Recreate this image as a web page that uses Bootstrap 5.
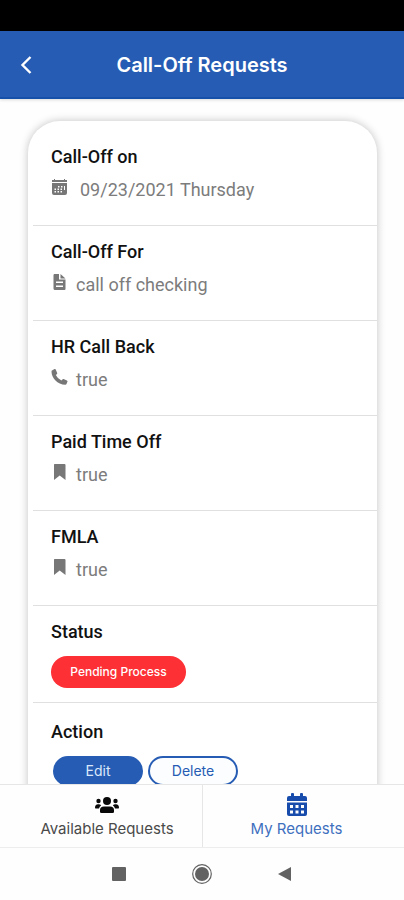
<!DOCTYPE html>
<html lang="en">
<head>
<meta charset="utf-8">
<meta name="viewport" content="width=device-width, initial-scale=1">
<title>Call-Off Requests</title>
<link href="https://cdn.jsdelivr.net/npm/bootstrap@5.3.0/dist/css/bootstrap.min.css" rel="stylesheet">
<style>
  body { font-family: Roboto, "Liberation Sans", sans-serif; background: #fefefe; }
  .device-status { height: 31px; background: #000; }
  .app-header { height: 68px; padding-top: 2px; background: #265cb3; border-bottom: 2px solid #1750a8; box-shadow: 0 1px 3px rgba(0,0,0,.15); display: grid; grid-template-columns: 52px 1fr 52px; }
  .app-header h1 { font: 600 20px/28px Inter, sans-serif; }
  .request-scroll { min-height: 0; padding: 22px 27px 0 28px; }
  .request-card { border-radius: 32px 32px 0 0; padding: 10px 0 20px 5px; box-shadow: 0 0 8px rgba(0,0,0,.24); background: #fff; }
  .request-row { padding: 14px 18px 23px; border-bottom: 1px solid #e0e0e0; }
  .request-row dt { font-size: 18px; line-height: 24px; font-weight: 500; color: #111; }
  .request-row dd { margin: 9px 0 0; font-size: 18px; line-height: 24px; color: #7c7c7c; }
  .request-row dd svg { width: 17px; height: 17px; margin: 1px 8px 0 0; flex: none; fill: #777; }
  .request-row dd .date-icon { margin-right: 12px; }
  .status-row { padding-bottom: 14px; }
  .action-row { padding-top: 17px; border-bottom: 0; }
  .request-row .pill-line { margin-top: 12px; }
  .pill { height: 32px; border-radius: 16px; font: 500 12px/16px Inter, sans-serif; }
  .pill-status { width: 135px; background: #fd3035; color: #fff; }
  .pill-buttons { gap: 5px; padding-left: 2px; }
  .pill-action { width: 90px; height: 30px; padding: 0; border: 2px solid #265cb3; font-weight: 400; font-size: 14px; }
  .pill-edit, .pill-edit:hover { background: #265cb3; color: #dbe8fb; }
  .pill-delete, .pill-delete:hover { background: #fbfdff; color: #265cb3; }
  .tab-bar { height: 64px; border-top: 1px solid #e6e6e6; border-bottom: 1px solid #ededed; background: #fefefe; }
  .tab-bar a { font: 400 15px/20px Inter, sans-serif; color: #4a4a4a; padding: 8px 0 0 12px; }
  .tab-bar a + a { border-left: 1px solid #e6e6e6; color: #3f70be; padding: 8px 14px 0 0; }
  .tab-bar svg { height: 24px; margin-bottom: 2px; }
  .system-nav { height: 52px; gap: 65px; }
</style>
<script src="https://cdn.jsdelivr.net/npm/bootstrap@5.3.0/dist/js/bootstrap.bundle.min.js"></script>
</head>
<body class="vh-100 d-flex flex-column overflow-hidden">
<div class="device-status flex-shrink-0"></div>
<header class="app-header flex-shrink-0 align-items-center position-relative">
  <button class="btn p-0 border-0 d-flex justify-content-center" type="button" aria-label="Back">
    <svg width="14" height="20" viewBox="0 0 14 20" fill="none" stroke="#fff" stroke-width="2.4"><path d="M11.5 2 3.5 10l8 8"/></svg>
  </button>
  <h1 class="m-0 text-center text-white text-nowrap">Call-Off Requests</h1>
</header>
<main class="request-scroll flex-grow-1 overflow-hidden">
  <dl class="request-card m-0">
    <div class="request-row"><dt>Call-Off on</dt>
      <dd class="d-flex"><svg class="date-icon" viewBox="0 0 17 17"><path fill-rule="evenodd" d="M1 1h2V0h1v1h9V0h1v1h2v2H1zM1 4h15v10q0 2-2 2H3q-2 0-2-2zM7 7v1.500h1.500V7zM10 7v1.500h1.500V7zM3.500 9.500V11H5V9.500zM6.500 9.500V11H8V9.500zM9.500 9.500V11H11V9.500zM3.500 12v1.500H5V12zM6.500 12v1.500H8V12zM9.500 12v1.500H11V12zM13 7v4h1V7z"/></svg>09/23/2021 Thursday</dd></div>
    <div class="request-row"><dt>Call-Off For</dt>
      <dd class="d-flex"><svg viewBox="0 0 17 17"><path fill-rule="evenodd" d="M3 0h5v5.500h6.500V15q0 1-1 1H4q-1.500 0-1.500-1.500V1zM9.500 0l5 4.500h-5zM5 7.500V9h7V7.500zM5 11.500V13h7v-1.500z"/></svg>call off checking</dd></div>
    <div class="request-row"><dt>HR Call Back</dt>
      <dd class="d-flex"><svg viewBox="0 0 17 17"><path d="M1 1.500 3.500 0q.8-.3 1.200.5L6.200 4q.2.700-.4 1.200L4.800 6q2 4 5.600 5.600l1-1.200q.5-.6 1.200-.3l3.300 1.300q.8.400.6 1.200l-1 2.500q-.3.700-1.200.7C6.500 15.500.5 9 .5 2.400q0-.6.5-.9z"/></svg>true</dd></div>
    <div class="request-row"><dt>Paid Time Off</dt>
      <dd class="d-flex"><svg viewBox="0 0 17 17"><path d="M3.500 0h10q1 0 1 1v15L8.700 11.500 3 16V1q0-1 .5-1z"/></svg>true</dd></div>
    <div class="request-row"><dt>FMLA</dt>
      <dd class="d-flex"><svg viewBox="0 0 17 17"><path d="M3.500 0h10q1 0 1 1v15L8.700 11.500 3 16V1q0-1 .5-1z"/></svg>true</dd></div>
    <div class="request-row status-row"><dt>Status</dt>
      <dd class="pill-line"><span class="pill pill-status d-flex align-items-center justify-content-center">Pending Process</span></dd></div>
    <div class="request-row action-row"><dt>Action</dt>
      <dd class="pill-line pill-buttons d-flex"><button type="button" class="btn pill pill-action pill-edit">Edit</button><button type="button" class="btn pill pill-action pill-delete">Delete</button></dd></div>
  </dl>
</main>
<nav class="tab-bar d-flex flex-shrink-0" aria-label="Requests">
  <a href="#available" class="w-50 d-flex flex-column align-items-center text-decoration-none">
    <svg width="26" viewBox="0 0 26 24" fill="#080808"><circle cx="13" cy="8" r="4"/><circle cx="4.500" cy="8" r="2.200"/><circle cx="21.500" cy="8" r="2.200"/><path d="M6 19v-2q0-3.500 4-3.500h6q4 0 4 3.500v2q0 1-1.500 1h-11Q6 20 6 19zM1 15q0-4 3.500-3.700 2 0 2.600 1.200Q5.500 13.500 5 15.500H1.500zM25 15q0-4-3.500-3.700-2 0-2.600 1.200 1.600 1 2.100 3h3.500z"/></svg>
    Available Requests</a>
  <a href="#mine" class="w-50 d-flex flex-column align-items-center text-decoration-none" aria-current="page">
    <svg width="22" viewBox="0 0 22 24" fill="#174bac"><path fill-rule="evenodd" d="M1 8V5q0-2 2-2h2V1q0-1 1-1h1q1 0 1 1v2h6V1q0-1 1-1h1q1 0 1 1v2h2q2 0 2 2v3zM1 9.500h20V21q0 2-2 2H3q-2 0-2-2zM4 12v3h3v-3zM9.500 12v3h3v-3zM15 12v3h3v-3zM4 17.500v3h3v-3zM9.500 17.500v3h3v-3zM15 17.500v3h3v-3z"/></svg>
    My Requests</a>
</nav>
<footer class="system-nav d-flex flex-shrink-0 align-items-center justify-content-center">
  <button type="button" class="btn border-0 p-0 d-flex" aria-label="Recent apps"><svg width="14" height="14" fill="#626262"><rect width="14" height="14" rx="1"/></svg></button>
  <button type="button" class="btn border-0 p-0 d-flex" aria-label="Home"><svg width="22" height="22" fill="#626262"><circle cx="11" cy="11" r="7"/><circle cx="11" cy="11" r="9.300" fill="none" stroke="#626262" stroke-width="1.200"/></svg></button>
  <button type="button" class="btn border-0 p-0 d-flex" aria-label="Back"><svg width="14" height="16" fill="#626262"><path d="M13 1v14L0 8z"/></svg></button>
</footer>
</body>
</html>
